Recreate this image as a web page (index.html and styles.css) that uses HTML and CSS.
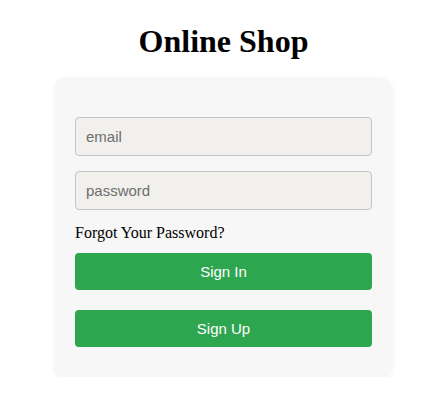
FILE: index.html
```html
<!DOCTYPE html>
<html>
<head>
<meta charset="utf-8">
<link rel="stylesheet" href="styles.css">
</head>
<body>
<main class="page">
  <h1 class="title">Online Shop</h1>
  <form class="card">
    <input class="field" type="email" placeholder="email">
    <input class="field" type="password" placeholder="password">
    <a class="forgot">Forgot Your Password?</a>
    <button class="btn btn-in" type="button">Sign In</button>
    <button class="btn btn-up" type="button">Sign Up</button>
  </form>
</main>
</body>
</html>
```

FILE: styles.css
```css
html, body {
  margin: 0;
  background: #ffffff;
}
body {
  font-family: "Liberation Serif", "Times New Roman", serif;
  color: #000;
}
.page {
  display: flex;
  flex-direction: column;
  align-items: center;
  padding: 0 0 0 6px;
}
.title {
  font-size: 32px;
  font-weight: bold;
  margin: 23px 0 18px;
  line-height: 37px;
}
.card {
  width: 297px;
  background: #f7f7f7;
  border-radius: 10px;
  box-shadow: 0 1px 6px rgba(0, 0, 0, 0.06);
  padding: 39px 20px 30px;
  display: flex;
  flex-direction: column;
}
.field {
  box-sizing: border-box;
  height: 39px;
  width: 100%;
  margin: 0 0 15px;
  padding: 0 10px;
  background: #f1f0ed;
  border: 1px solid #c4c4c4;
  border-radius: 4px;
  font-family: "Liberation Sans", Arial, sans-serif;
  font-size: 15px;
  color: #333;
  outline: none;
}
.field::placeholder {
  color: #6e6e6e;
}
.forgot {
  font-size: 16px;
  line-height: 16px;
  color: #000;
  margin: 0 0 12px;
}
.btn {
  box-sizing: border-box;
  height: 37px;
  width: 100%;
  border: none;
  border-radius: 4px;
  background: #2ea54f;
  color: #fff;
  font-family: "Liberation Sans", Arial, sans-serif;
  font-size: 15px;
  padding: 0;
}
.btn-up {
  margin-top: 20px;
}
```
